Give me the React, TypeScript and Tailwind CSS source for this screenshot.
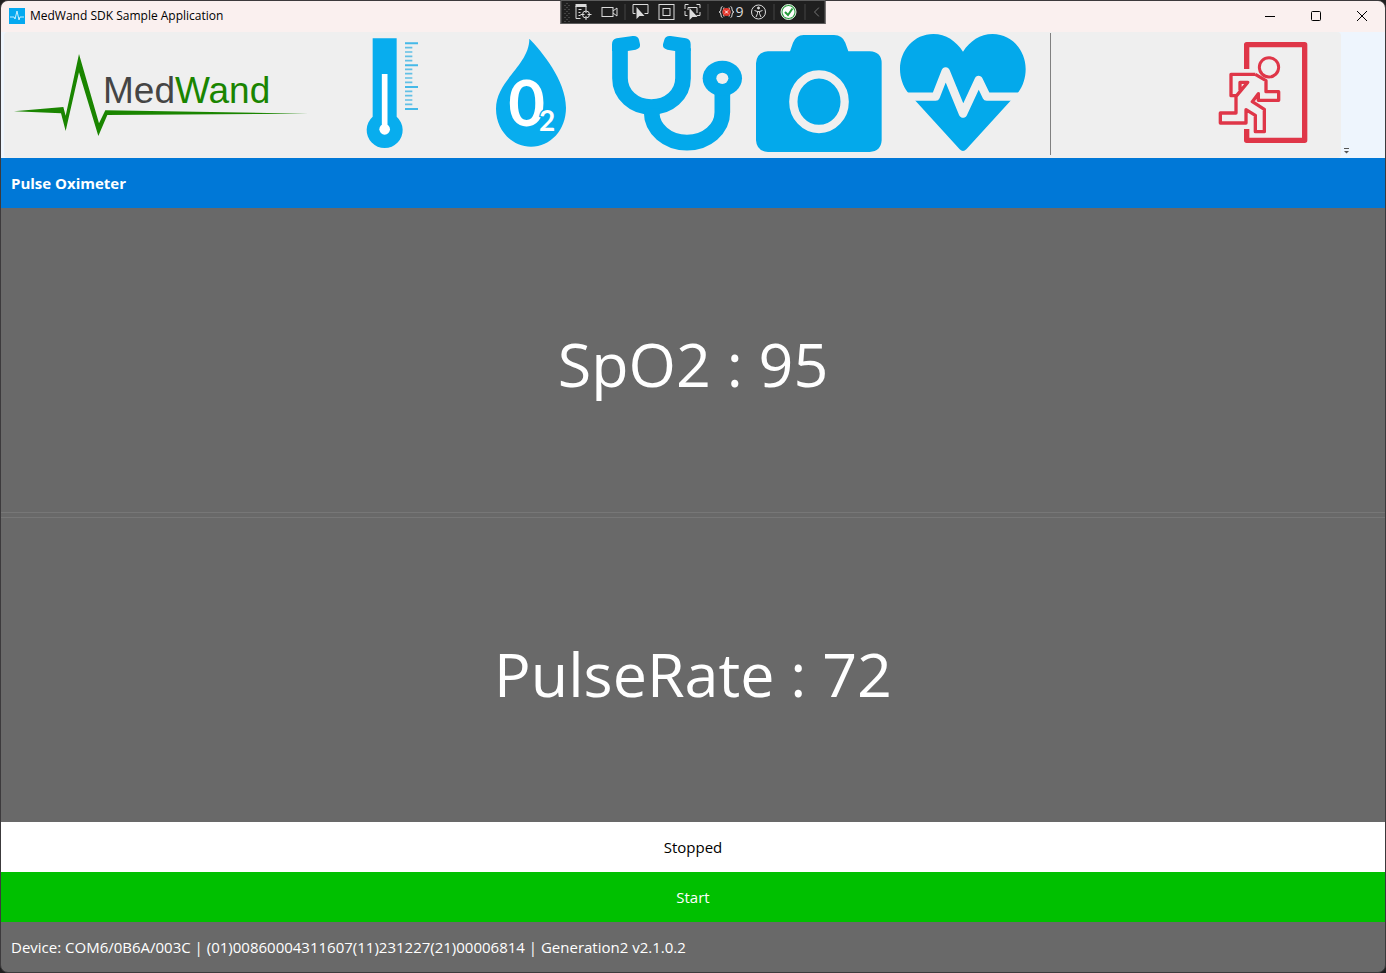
import type { ReactNode } from "react";

const SHORT_TICKS = [68, 81, 94, 107, 133, 146, 159, 172, 199, 212, 225, 238];
const LONG_TICKS = [55, 121, 186, 252];
const GRIP_ROWS = [5, 9, 13, 17, 21];

function Logo() {
    return (
        <svg viewBox="12 96 933 378" className="h-[126px] w-[311px]">
            <path
                d="M42 334 190 321 197 347 237 162 297 370 316 331 924 341 322 345 295 408 237 217 197 393 183 340Z"
                fill="#1a8500"
            />
            <text
                x="309"
                y="310"
                fontSize="111"
                fontFamily="Liberation Sans, sans-serif"
                fill="#454545"
            >
                Med<tspan fill="#1a8500">Wand</tspan>
            </text>
        </svg>
    );
}

function ThermometerIcon() {
    return (
        <svg viewBox="-75 21 432 378" className="h-[126px] w-36">
            <path
                d="M98 40H170V275A54 54 0 1 1 98 275Z"
                fill="#08adee"
            />
            <path d="M134 147V312" stroke="#fff" strokeWidth="17" />
            <circle cx="134" cy="313" r="16" fill="#fff" />
            {LONG_TICKS.map((y) => (
                <path
                    key={y}
                    d={`M195 ${y}H234`}
                    stroke="#45b9e8"
                    strokeWidth="6"
                />
            ))}
            {SHORT_TICKS.map((y) => (
                <path
                    key={y}
                    d={`M195 ${y}H217`}
                    stroke="#62c0e6"
                    strokeWidth="5"
                />
            ))}
        </svg>
    );
}

function OxygenIcon() {
    return (
        <svg viewBox="357 21 432 378" className="h-[126px] w-36">
            <path
                d="M568 41C604 78 678 165 678 248C678 315 631 365 573 365C515 365 468 315 468 252C468 166 568 121 568 41Z"
                fill="#08adee"
            />
            <text
                x="505"
                y="304"
                fontSize="190"
                fontFamily="Lato, sans-serif"
                fontWeight="700"
                fill="#fff"
            >
                0
                <tspan
                    x="597"
                    y="317"
                    fontSize="84"
                    stroke="#08adee"
                    strokeWidth="8"
                    paintOrder="stroke"
                >
                    2
                </tspan>
            </text>
        </svg>
    );
}

function StethoscopeIcon() {
    return (
        <svg viewBox="9 21 432 378" className="h-[126px] w-36">
            <g fill="none" stroke="#03a9eb" strokeWidth="47">
                <path d="M60 70V160C60 209 102 246 154 246C207 246 249 209 249 160V70" />
                <path d="M155 250V262C155 312 202 353 261 353C320 353 367 312 367 262V195" />
            </g>
            <path
                d="M36 58Q36 43 50 40L98 33Q113 31 117 44L120 58Q122 71 107 74L83 78H36ZM272 58Q272 43 258 40L212 33Q197 31 193 44L189 58Q187 71 202 74L225 78H272Z"
                fill="#03a9eb"
            />
            <ellipse cx="367" cy="160" rx="59" ry="53" fill="#03a9eb" />
            <ellipse cx="367" cy="160" rx="18" ry="17" fill="#efefef" />
        </svg>
    );
}

function CameraIcon() {
    return (
        <svg viewBox="441 21 432 378" className="h-[126px] w-36">
            <path
                d="M504 79H570L579 53Q588 30 611 30H702Q727 30 736 53L745 79H809Q845 81 845 115V346Q843 379 809 381H504Q470 379 468 346V115Q470 81 504 79Z"
                fill="#03a9eb"
            />
            <ellipse
                cx="657"
                cy="230"
                rx="77"
                ry="82"
                fill="none"
                stroke="#efefef"
                strokeWidth="25"
            />
        </svg>
    );
}

function HeartIcon() {
    return (
        <svg viewBox="3 21 432 378" className="h-[126px] w-36">
            <path
                d="M219 80C198 48 168 27 130 27C72 27 30 76 30 132C30 158 39 183 53 202L77 228L209 373Q219 383 229 373L361 228L385 202C399 183 407 158 407 132C407 76 365 27 308 27C270 27 240 48 219 80Z"
                fill="#03a9eb"
            />
            <path
                d="M20 215H137L167 139L219 266L266 165L290 215H420"
                fill="none"
                stroke="#efefef"
                strokeWidth="25"
                strokeLinejoin="round"
            />
        </svg>
    );
}

function ExitIcon() {
    return (
        <svg
            viewBox="-27 96 432 378"
            className="h-[126px] w-36"
            fill="none"
            stroke="#df3648"
            strokeLinejoin="round"
        >
            <path d="M140 207V134H314V421H140V387" strokeWidth="16" />
            <circle cx="207" cy="202" r="29" strokeWidth="9" />
            <path
                d="M166 223H93V287H108V339H61V369H138V329L166 346V395H193V328L157 305L175 281V301H236V275H198V242L166 223M108 289 143 247H120V271"
                strokeWidth="10"
            />
        </svg>
    );
}

function ToolButton({
    label,
    children,
}: {
    label: string;
    children: ReactNode;
}) {
    return (
        <button type="button" aria-label={label} className="shrink-0">
            {children}
        </button>
    );
}

function DebugButton({
    label,
    children,
}: {
    label: string;
    children: ReactNode;
}) {
    return (
        <button type="button" aria-label={label} className="shrink-0">
            <svg
                viewBox="0 0 26 22"
                className="h-[22px] w-[26px]"
                fill="none"
                stroke="#dcdcdc"
            >
                {children}
            </svg>
        </button>
    );
}

function DebugSeparator() {
    return <div className="mx-0.5 h-4 w-px shrink-0 bg-[#444]" />;
}

function DebugToolbar() {
    return (
        <div className="absolute top-0 left-1/2 flex h-6 w-[265px] -translate-x-1/2 items-center border border-[#5c5c5c] bg-[#1f1f1f]">
            <svg
                viewBox="0 0 9 22"
                className="h-[22px] w-[9px] shrink-0"
                fill="#6a6a6a"
            >
                {GRIP_ROWS.map((y) => (
                    <g key={y}>
                        <rect x="3" y={y - 1} width="1" height="1" />
                        <rect x="7" y={y - 1} width="1" height="1" />
                        <rect x="5" y={y - 3} width="1" height="1" />
                    </g>
                ))}
            </svg>
            <DebugButton label="Go to Live Visual Tree">
                <path d="M5 4.500H16" strokeWidth="3" />
                <path d="M5.500 5V17.500H10M8 8.500H11M8 11.500H10M8 14.500H10M15.500 5V8" />
                <circle cx="15.500" cy="13.500" r="3.500" />
                <path d="M15.500 8V12M15.500 15V19M10 13.500H14M17 13.500H21" />
            </DebugButton>
            <DebugButton label="Record">
                <rect x="5.500" y="6.500" width="11" height="9" />
                <path d="M16.500 10 20.500 7V15L16.500 12" />
            </DebugButton>
            <DebugSeparator />
            <DebugButton label="Select Element">
                <path d="M8 12.500H5.500V3.500H20.500V12.500H17" />
                <path d="M9 6V18L12 15H17Z" fill="#dcdcdc" stroke="none" />
            </DebugButton>
            <DebugButton label="Display Layout Adorners">
                <rect x="5.500" y="3.500" width="15" height="15" />
                <rect x="9.500" y="7.500" width="7" height="7" />
            </DebugButton>
            <DebugButton label="Track Focused Element">
                <path d="M5.500 8V3.500H9M17 3.500H20.500V7M20.500 11V14.500H17M5.500 10V14.500H8M8.500 9V6.500H17.500V12" />
                <path d="M10 7V19L13 16H18Z" fill="#dcdcdc" stroke="none" />
            </DebugButton>
            <DebugSeparator />
            <button
                type="button"
                aria-label="Binding failures"
                className="flex w-[35px] shrink-0 items-center justify-end pr-0.5 text-sm leading-5 text-[#dcdcdc]"
            >
                <svg
                    viewBox="0 0 16 16"
                    className="mr-px size-4"
                    fill="none"
                    stroke="#dcdcdc"
                >
                    <path d="M4 2.500Q2.500 2.500 2.500 5Q2.500 8 .500 8Q2.500 8 2.500 11Q2.500 13.500 4 13.500M12 2.500Q13.500 2.500 13.500 5Q13.500 8 15.500 8Q13.500 8 13.500 11Q13.500 13.500 12 13.500M5.500 3.500Q3.500 8 5.500 12.500M10.500 3.500Q12.500 8 10.500 12.500" />
                    <circle cx="8" cy="8" r="4" fill="#e5382d" stroke="none" />
                    <path
                        d="M6.500 6.500 9.500 9.500M9.500 6.500 6.500 9.500"
                        stroke="#fff"
                    />
                </svg>
                9
            </button>
            <DebugButton label="Scan for accessibility issues">
                <circle cx="13" cy="11" r="7" />
                <circle cx="13" cy="7" r="1" fill="#dcdcdc" />
                <path d="M9 9.500 12 10.500H14L17 9.500M12 10.500V12.500L10.500 16M14 10.500V12.500L15.500 16" />
            </DebugButton>
            <DebugSeparator />
            <DebugButton label="Hot Reload">
                <circle
                    cx="12"
                    cy="11"
                    r="7.500"
                    fill="#2f9e44"
                    stroke="#e8f5e8"
                />
                <circle cx="12" cy="11" r="6" fill="#fff" stroke="none" />
                <path
                    d="M8.500 11 11.500 14 16 7.500"
                    stroke="#259b3b"
                    strokeWidth="2"
                />
            </DebugButton>
            <DebugSeparator />
            <button
                type="button"
                aria-label="Collapse toolbar"
                className="flex flex-1 justify-center"
            >
                <svg viewBox="0 0 6 10" className="h-2.5 w-1.5" fill="none">
                    <path d="M5.500 .500 1 5 5.500 9.500" stroke="#777" />
                </svg>
            </button>
        </div>
    );
}

function TitleBar() {
    return (
        <header className="flex h-[31px] shrink-0 items-center bg-[#faf0ef] pb-0.5 pl-2">
            <svg viewBox="0 0 16 16" className="size-4 shrink-0">
                <rect width="16" height="16" fill="#05a9f0" />
                <path
                    d="M1 9H5L6 11L8 3L10 12L11 9H15"
                    fill="none"
                    stroke="#c9efff"
                />
            </svg>
            <h1 className="ml-[5px] flex-1 text-xs">
                MedWand SDK Sample Application
            </h1>
            <div className="flex text-black">
                <button
                    type="button"
                    aria-label="Minimize"
                    className="flex h-7 w-[46px] items-center justify-center"
                >
                    <svg viewBox="0 0 10 10" className="size-[10px]">
                        <path d="M0 5.500H10" stroke="currentColor" />
                    </svg>
                </button>
                <button
                    type="button"
                    aria-label="Maximize"
                    className="flex h-7 w-[46px] items-center justify-center"
                >
                    <svg viewBox="0 0 10 10" className="size-[10px]">
                        <rect
                            x=".5"
                            y=".5"
                            width="9"
                            height="9"
                            rx="1"
                            fill="none"
                            stroke="currentColor"
                        />
                    </svg>
                </button>
                <button
                    type="button"
                    aria-label="Close"
                    className="flex h-7 w-[46px] items-center justify-center"
                >
                    <svg viewBox="0 0 10 10" className="size-[10px]">
                        <path
                            d="M0 0 10 10M10 0 0 10"
                            stroke="currentColor"
                        />
                    </svg>
                </button>
            </div>
        </header>
    );
}

function Toolbar() {
    return (
        <nav className="flex h-[126px] shrink-0 bg-[#eef5fd]">
            <div className="ml-[3px] flex flex-1 items-start rounded-sm bg-[#efefef] pr-1.5">
                <ToolButton label="MedWand">
                    <Logo />
                </ToolButton>
                <ToolButton label="Thermometer">
                    <ThermometerIcon />
                </ToolButton>
                <ToolButton label="Pulse Oximeter">
                    <OxygenIcon />
                </ToolButton>
                <ToolButton label="Stethoscope">
                    <StethoscopeIcon />
                </ToolButton>
                <ToolButton label="Camera">
                    <CameraIcon />
                </ToolButton>
                <ToolButton label="ECG">
                    <HeartIcon />
                </ToolButton>
                <div className="mt-px ml-[15px] h-[122px] w-px bg-[#808080]" />
                <div className="flex-1" />
                <ToolButton label="Exit">
                    <ExitIcon />
                </ToolButton>
            </div>
            <button
                type="button"
                aria-label="Toolbar options"
                className="flex w-11 items-end pb-1 pl-0.5"
            >
                <svg viewBox="0 0 7 6" className="h-1.5 w-[7px]">
                    <path d="M1 .5H6" stroke="#555" />
                    <path d="M1 3H6L3.500 5.500Z" fill="#555" />
                </svg>
            </button>
        </nav>
    );
}

function Reading({ name, value }: { name: string; value: number }) {
    return (
        <div className="flex flex-1 items-center justify-center pt-2 text-[61px] leading-[84px]">
            {name} : {value}
        </div>
    );
}

export default function App() {
    return (
        <div className="relative bg-[#1f1f1f] font-['Open_Sans','Noto_Sans',sans-serif]">
            <div className="flex min-h-screen flex-col overflow-hidden rounded-lg border border-[#3c3a3c] bg-[#696969] text-[15px] leading-5 text-black">
                <TitleBar />
                <Toolbar />
                <h2 className="flex h-[50px] shrink-0 items-center bg-[#0078d7] px-2.5 font-bold text-white">
                    Pulse Oximeter
                </h2>
                <main className="flex flex-1 flex-col text-white">
                    <Reading name="SpO2" value={95} />
                    <div className="h-1.5 border-y border-[#777]" />
                    <Reading name="PulseRate" value={72} />
                </main>
                <div
                    role="status"
                    className="flex h-[50px] shrink-0 items-center justify-center bg-white"
                >
                    Stopped
                </div>
                <button
                    type="button"
                    className="h-[50px] shrink-0 bg-[#00c000] text-white"
                >
                    Start
                </button>
                <footer className="flex h-[50px] shrink-0 items-center px-2.5 text-white">
                    Device: COM6/0B6A/003C | (01)00860004311607(11)231227(21)00006814
                    | Generation2 v2.1.0.2
                </footer>
            </div>
            <DebugToolbar />
        </div>
    );
}
